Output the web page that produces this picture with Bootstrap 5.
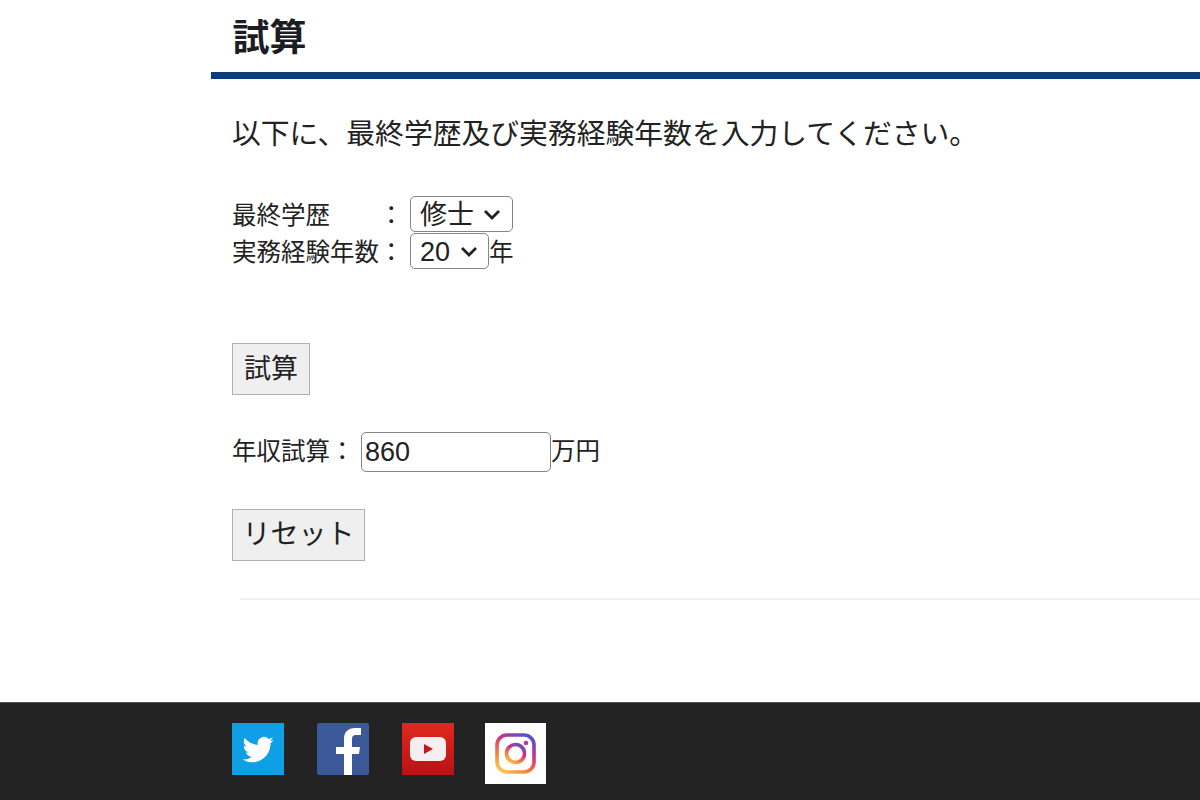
<!DOCTYPE html>
<html lang="ja">
<head>
<meta charset="utf-8">
<title>試算</title>
<link href="https://cdn.jsdelivr.net/npm/bootstrap@5.3.0/dist/css/bootstrap.min.css" rel="stylesheet">
<style>
html,body{height:800px;overflow:hidden;background:#fff;}
body{font-family:"Liberation Sans","Noto Sans CJK JP",sans-serif;color:#222;}
.page-wrap{height:702px;padding-left:211px;overflow:hidden;}
.calc-title{font-size:37px;font-weight:700;line-height:40px;margin:0;padding:19px 0 13px 21.500px;border-bottom:7px solid #0a3d7e;color:#1c1c24;}
.calc-body{padding-left:21px;}
.calc-lead{font-size:28.800px;line-height:40px;margin:35px 0 0;white-space:nowrap;}
.calc-row{font-size:24.500px;line-height:36px;height:37px;white-space:nowrap;}
.row-one{margin-top:43px;}
.lbl-w{width:178px;}
.lbl-name{width:147px;}
.sel,.txt{font-family:"Liberation Sans","Noto Sans CJK JP",sans-serif;font-size:27px;color:#222;background-color:#fff;border:1.500px solid #858585;border-radius:5px;}
.sel{height:36px;padding:0 0 0 9px;margin-bottom:3px;appearance:none;-webkit-appearance:none;background-repeat:no-repeat;background-size:18px 11px;background-position:right 11px center;background-image:url("data:image/svg+xml,%3Csvg xmlns='http://www.w3.org/2000/svg' viewBox='0 0 18 11'%3E%3Cpath d='M2 2l7 7 7-7' fill='none' stroke='%23222' stroke-width='2.800'/%3E%3C/svg%3E");}
.sel-a{width:103px;}
.sel-b{width:79px;background-position:right 10px center;}
.txt{width:190px;height:40px;padding:0 3px;line-height:36px;}
.plain-btn{font-family:"Liberation Sans","Noto Sans CJK JP",sans-serif;font-size:27px;line-height:36px;color:#222;background:#efefef;border:1.500px solid #b0b0b0;height:52px;display:block;padding:0;}
.btn-a{width:78px;margin-top:72px;}
.btn-b{width:133px;margin-top:37px;font-size:28px;}
.res-row{font-size:24.500px;margin-top:37px;height:40px;white-space:nowrap;}
.res-lbl{width:129px;}
.calc-rule{height:2px;background:#f0f0f0;margin:37px 0 0 8px;}
.foot-bar{height:98px;background:#232323;border-top:1px solid #555;padding:20px 0 0 232px;}
.soc{display:block;width:52px;height:52px;}
.soc-ig{width:61px;height:61px;}
.gap-soc{gap:33px;}
.gap-soc .soc-ig{margin-left:-2px;}
</style>
</head>
<body>
<main class="page-wrap">
  <h1 class="calc-title">試算</h1>
  <div class="calc-body">
    <p class="calc-lead">以下に、最終学歴及び実務経験年数を入力してください。</p>
    <div class="calc-row row-one d-flex align-items-center">
      <span class="lbl-w d-flex"><span class="lbl-name">最終学歴</span><span>：</span></span>
      <select class="sel sel-a"><option>修士</option></select>
    </div>
    <div class="calc-row d-flex align-items-center">
      <span class="lbl-w">実務経験年数：</span>
      <select class="sel sel-b"><option>20</option></select><span>年</span>
    </div>
    <button type="button" class="plain-btn btn-a">試算</button>
    <div class="res-row d-flex align-items-center">
      <span class="res-lbl">年収試算：</span>
      <input class="txt" type="text" value="860"><span>万円</span>
    </div>
    <button type="button" class="plain-btn btn-b">リセット</button>
    <div class="calc-rule"></div>
  </div>
</main>
<footer class="foot-bar d-flex align-items-start gap-soc">
  <svg class="soc" viewBox="0 0 52 52" role="img" aria-label="Twitter"><rect width="52" height="52" fill="#0f9fe6"/><g transform="translate(10.500 10) scale(1.950)"><path fill="#fff" d="M5.026 15c6.038 0 9.341-5.003 9.341-9.334 0-.14 0-.282-.006-.422A6.685 6.685 0 0 0 16 3.542a6.658 6.658 0 0 1-1.889.518 3.301 3.301 0 0 0 1.447-1.817 6.533 6.533 0 0 1-2.087.793A3.286 3.286 0 0 0 7.875 6.03a9.325 9.325 0 0 1-6.767-3.429 3.289 3.289 0 0 0 1.018 4.382A3.323 3.323 0 0 1 .64 6.575v.045a3.288 3.288 0 0 0 2.632 3.218 3.203 3.203 0 0 1-.865.115 3.23 3.23 0 0 1-.614-.057 3.283 3.283 0 0 0 3.067 2.277A6.588 6.588 0 0 1 .78 13.58a6.32 6.32 0 0 1-.78-.045A9.344 9.344 0 0 0 5.026 15z"/></g></svg>
  <svg class="soc" viewBox="0 0 52 52" role="img" aria-label="Facebook"><rect width="52" height="52" rx="2" fill="#3b5998"/><path fill="#fff" d="M27 52V31h-8v-7h8v-8c0-7 4-11 11-11h6v7h-5c-3 0-4 1.500-4 4v8h8l-1 7h-7v21z"/></svg>
  <svg class="soc" viewBox="0 0 52 52" role="img" aria-label="YouTube"><defs><linearGradient id="ytg" x1="0" y1="0" x2="0" y2="1"><stop offset="0" stop-color="#e0281f"/><stop offset="1" stop-color="#b81315"/></linearGradient></defs><rect width="52" height="52" fill="url(#ytg)"/><rect x="8" y="14" width="36" height="24" rx="6" fill="#f4eeee"/><path fill="#c4161c" d="M22 21l9 5-9 5z"/></svg>
  <svg class="soc soc-ig" viewBox="0 0 61 61" role="img" aria-label="Instagram"><defs><linearGradient id="igg" x1="0.2" y1="1" x2="0.8" y2="0"><stop offset="0" stop-color="#fdc24a"/><stop offset="0.35" stop-color="#f3703a"/><stop offset="0.65" stop-color="#d02f8a"/><stop offset="1" stop-color="#5a50c8"/></linearGradient></defs><rect width="61" height="61" fill="#fff"/><rect x="12" y="12" width="37" height="37" rx="10" fill="none" stroke="url(#igg)" stroke-width="3.600"/><circle cx="30.500" cy="30.500" r="9" fill="none" stroke="url(#igg)" stroke-width="3.600"/><circle cx="41" cy="20" r="2.300" fill="#b6379f"/></svg>
</footer>
<script src="https://cdn.jsdelivr.net/npm/bootstrap@5.3.0/dist/js/bootstrap.bundle.min.js"></script>
</body>
</html>
